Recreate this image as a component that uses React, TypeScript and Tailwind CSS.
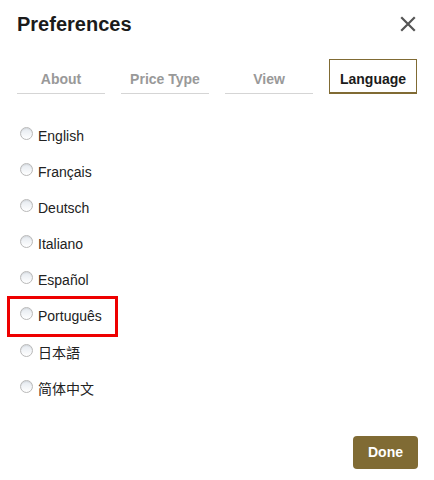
import { useState } from "react"

const tabs = ["About", "Price Type", "View", "Language"]
const languages = ["English", "Français", "Deutsch", "Italiano", "Español", "Português", "日本語", "简体中文"]

function Radio({ checked }: { checked: boolean }) {
  return (
    <span className="mt-[-6px] flex h-[13px] w-[13px] shrink-0 items-center justify-center rounded-full border border-[#b9b9b9] bg-gradient-to-b from-[#e4e9ef] to-[#ffffff] shadow-[inset_0_1px_1px_rgba(0,0,0,0.08)]">
      {checked && <span className="h-[5px] w-[5px] rounded-full bg-[#333]" />}
    </span>
  )
}

export default function App() {
  const [tab, setTab] = useState("Language")
  const [lang, setLang] = useState<string | null>(null)

  return (
    <div className="h-[480px] w-[434px] bg-white font-['Liberation_Sans',Arial,sans-serif] text-[#222]">
      <div className="flex items-center justify-between pl-[17px] pr-[18px] pt-[10px]">
        <h1 className="text-[20px] font-bold leading-[28px] text-[#1b1b1b]">Preferences</h1>
        <button className="text-[#555]">
          <svg width="16" height="16" viewBox="0 0 16 16" stroke="currentColor" strokeWidth="2.2" strokeLinecap="square">
            <path d="M2 2L14 14M14 2L2 14" />
          </svg>
        </button>
      </div>

      <div className="mt-[21px] flex gap-4 px-[17px]">
        {tabs.map((t) =>
          t === tab ? (
            <button
              key={t}
              onClick={() => setTab(t)}
              className="h-[35px] w-[88px] border border-b-2 border-[#806b34] pt-[6px] text-[14px] font-bold text-[#1b1b1b]"
            >
              {t}
            </button>
          ) : (
            <button
              key={t}
              onClick={() => setTab(t)}
              className="h-[35px] w-[88px] border-b border-[#d5d5d5] pt-[6px] text-[14px] font-bold text-[#999]"
            >
              {t}
            </button>
          )
        )}
      </div>

      <div className="mt-[24px] flex flex-col pl-[7px]">
        {languages.map((l) => (
          <label
            key={l}
            onClick={() => setLang(l)}
            className={`flex w-[111px] items-center gap-[5px] text-[14px] text-[#222] font-['Liberation_Sans','Noto_Sans_CJK_SC',sans-serif] ${
              l === "Português" ? "my-[-2px] h-[41px] border-[3px] border-[#ee0000] pl-[10px]" : "h-[36px] pl-[13px]"
            }`}
          >
            <Radio checked={lang === l} />
            <span>{l}</span>
          </label>
        ))}
      </div>

      <div className="mt-[29px] flex justify-end pr-[16px]">
        <button className="h-[33px] w-[65px] rounded-[4px] bg-[#806b34] text-[14px] font-bold text-white">Done</button>
      </div>
    </div>
  )
}
